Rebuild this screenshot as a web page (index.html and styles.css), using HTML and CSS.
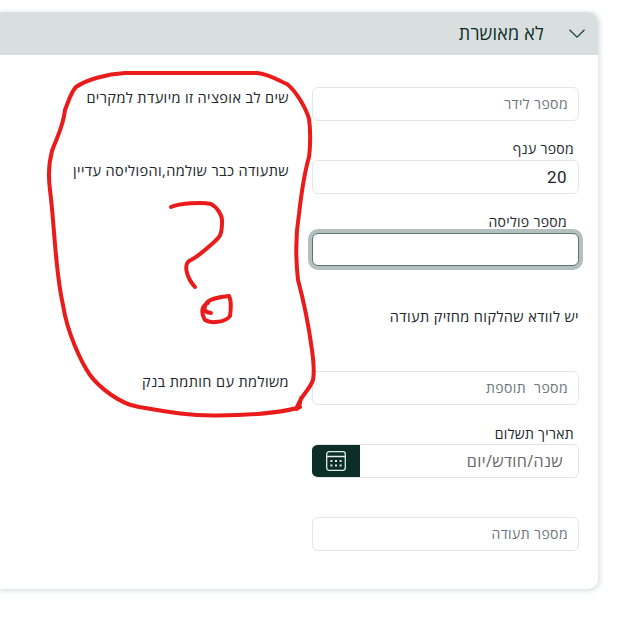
FILE: index.html
```html
<!DOCTYPE html>
<html lang="he" dir="rtl">
<head>
<meta charset="utf-8">
<title>לא מאושרת</title>
<link rel="stylesheet" href="styles.css">
</head>
<body>
<section class="card">
  <header class="card-header">
    <svg class="chevron" viewBox="0 0 16 9"><path d="M.5.7 8 8.2 15.5.7"/></svg>
    <h1 class="title">לא מאושרת</h1>
  </header>
  <form class="form">
    <div class="row first">
      <div class="field"><input class="input hint" type="text" placeholder="מספר לידר"></div>
      <p class="note">שים לב אופציה זו מיועדת למקרים</p>
    </div>
    <div class="row">
      <div class="field"><label class="label" for="branch">מספר ענף</label><input class="input" id="branch" type="text" value="20"></div>
      <p class="note">שתעודה כבר שולמה,והפוליסה עדיין</p>
    </div>
    <div class="row">
      <div class="field"><label class="label inset" for="policy">מספר פוליסה</label><input class="input active" id="policy" type="text"></div>
    </div>
    <div class="row message"><p class="check">יש לוודא שהלקוח מחזיק תעודה</p></div>
    <div class="row">
      <div class="field"><input class="input hint double" type="text" placeholder="מספר  תוספת"></div>
      <p class="note">משולמת עם חותמת בנק</p>
    </div>
    <div class="row">
      <div class="field">
        <label class="label near" for="date">תאריך תשלום</label>
        <div class="date">
          <input class="input date-input" id="date" type="text" placeholder="שנה/חודש/יום">
          <button class="calendar" type="button" aria-label="תאריך תשלום">
            <svg viewBox="0 0 20 20" width="20" height="20"><rect x=".7" y=".7" width="18.6" height="18.6" rx="2.5"/><path d="M1 5.5h18"/><path class="dots" d="M4.4 10h2M9 10h2M13.6 10h2M4.4 14.6h2M9 14.6h2M13.6 14.6h2"/></svg>
          </button>
        </div>
      </div>
    </div>
    <div class="row">
      <div class="field"><input class="input hint" type="text" placeholder="מספר תעודה"></div>
    </div>
  </form>
</section>
<svg class="markup" viewBox="0 0 629 620" width="629" height="620">
  <path d="M300 407C285 412 257 415 217 415.500C190 416 168 412 139 407C119 404 98 386 90 375C81 362 67 332 63 305C55 270 55 230 50 190C48 175 49 162 52 151C56 139 63 128 65 110C69 100 71 92 76 87C86 80 106 74 125 73H257C268 74 278 80 287 84C296 91 306 108 309 119C311 132 310 150 309 157C304 174 302 188 299 214C295 238 296 262 298 280C304 302 309 328 312 350C314 365 314 375 313 380C310 389 302 395 299 403L296 409C299 409 300 404 301 398"/>
  <path d="M171 207C180 203 203 202 211 204C217 207 223 216 222 222C222 235 220 237 213 243C205 250 198 257 189 261C184 265 186 277 195 287"/>
  <path d="M211 313C204 312 203 309 206 304C209 298 221 297 229 296C231 300 231 309 230 316C226 322 211 324 205 320C201 313 201 306 208 303"/>
</svg>
</body>
</html>
```
FILE: styles.css
```css
* { box-sizing: border-box; }
body {
  margin: 0;
  height: 620px;
  overflow: hidden;
  background: #fff;
  color: #212529;
  font-family: "Open Sans", "Noto Sans", "Liberation Sans", sans-serif;
}
.card {
  width: 598px;
  height: 577px;
  margin: 12px 31px 0 0;
  border-radius: 0 10px 10px 0;
  background: #fff;
  box-shadow: 1px 1px 5px 1px #d9e2e0;
}
.card-header {
  height: 43px;
  padding: 0 13px;
  display: flex;
  align-items: center;
  gap: 25px;
  background: #d9dfde;
  border-radius: 0 10px 0 0;
}
.chevron { width: 16px; height: 9px; fill: none; stroke: #17463c; stroke-width: 1.3; overflow: visible; }
.title { margin: 0; padding-bottom: 2px; font-size: 18px; line-height: 24px; font-weight: 400; letter-spacing: .2px; color: #0b2d27; }
.form { padding-right: 19px; }
.row { height: 73px; display: flex; align-items: flex-end; gap: 23px; }
.first { height: 66px; }
.message { height: 65px; }
.field { width: 267px; display: flex; flex-direction: column; }
.label { font-size: 14px; line-height: 20px; padding-right: 5px; margin-bottom: 1px; white-space: nowrap; letter-spacing: .3px; }
.label.inset { padding-right: 12px; }
.label.near { margin-bottom: 0; }
.input {
  width: 100%;
  height: 34px;
  padding: 0 11px;
  border: 1px solid #e3e6e6;
  border-radius: 6px;
  outline: 0;
  background: #fff;
  color: #212529;
  font: 17px Roboto, "Open Sans", sans-serif;
  letter-spacing: .4px;
}
.input::placeholder { color: #6c757d; opacity: 1; font: 14px "Open Sans", sans-serif; }
.hint { padding: 0 10px 2px; }
.double::placeholder { white-space: pre; }
.active { height: 33px; margin-bottom: 1px; border-color: #58756e; box-shadow: 0 0 0 4px #b3c0bd; }
.note, .check { margin: 0; font-size: 14.5px; line-height: 20px; white-space: nowrap; letter-spacing: .39px; }
.note { padding-bottom: 13px; }
.check { padding-bottom: 5px; }
.date { display: flex; border: 1px solid #e1e3ea; border-left: 0; border-radius: 6px; height: 34px; overflow: hidden; }
.date-input { flex: 1; min-width: 0; height: 32px; border: 0; border-radius: 0; padding-right: 15px; }
.date-input::placeholder { font-size: 16px; color: #666; }
.calendar {
  width: 48px;
  height: 32px;
  padding: 0;
  border: 0;
  display: grid;
  place-items: center;
  background: #0b2f28;
}
.calendar svg { fill: none; stroke: #e5eae8; stroke-width: 1.3; }
.calendar .dots { stroke-width: 2; }
.markup { position: absolute; left: 0; top: 0; fill: none; stroke: #e91b1b; stroke-width: 4; stroke-linecap: round; stroke-linejoin: round; pointer-events: none; }
```
